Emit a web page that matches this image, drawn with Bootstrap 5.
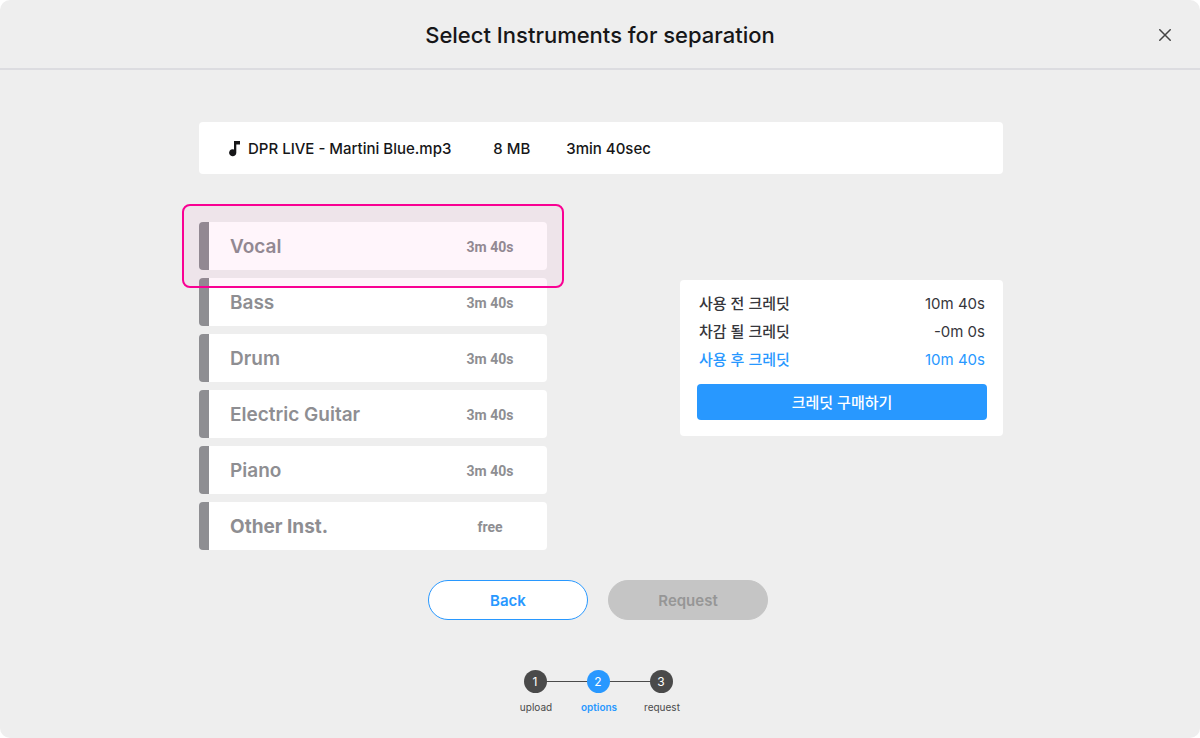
<!DOCTYPE html>
<html lang="ko">
<head>
<meta charset="utf-8">
<meta name="viewport" content="width=device-width, initial-scale=1">
<title>Select Instruments for separation</title>
<link href="https://cdn.jsdelivr.net/npm/bootstrap@5.3.0/dist/css/bootstrap.min.css" rel="stylesheet">
<style>
  :root { --accent: #2898ff; --muted: #8e8e92; --ink: #161618; }
  body { background: #fff; color: var(--ink); font-family: Inter, "Noto Sans CJK KR", sans-serif; }
  .dialog-page { background: #eee; border-radius: 10px; }
  .dialog-head { border-bottom: 2px solid #dcdce0; height: 70px; padding-top: 2px; }
  .dialog-title { font-size: 22px; line-height: 32px; font-weight: 500; }
  .close-btn { right: 24px; width: 22px; height: 22px; color: #444; }
  .dialog-body { max-width: 806px; padding: 52px 0 0 2px; }
  .panel { background: #fff; border-radius: 4px; }
  .file-bar { min-height: 52px; padding: 2px 30px 0; font-size: 15px; font-weight: 500; }
  .file-bar .size { margin-left: 42px; }
  .file-bar .length { margin-left: 36px; }
  .work-area { margin-top: 48px; }
  .inst-list { width: 348px; gap: 8px; }
  .inst { height: 48px; padding: 2px 22px 0 21px; border: 0; border-left: 10px solid var(--muted); color: var(--muted); font-size: 19px; font-weight: 600; text-align: left; }
  .inst .cost { width: 70px; font-family: Roboto, sans-serif; font-size: 14px; font-weight: 700; text-align: center; }
  .picked { top: -18px; left: -17px; right: -17px; height: 84px; border: 2px solid #f90093; border-radius: 8px; background: rgba(255, 0, 144, .04); pointer-events: none; }
  .credit { width: 323px; margin-top: 58px; padding: 10px 16px 16px 17px; font-size: 15px; }
  .credit .line { line-height: 28px; padding: 0 2px; color: #36363b; }
  .credit .line dt { font-weight: 500; }
  .credit .line dd { font-weight: 400; }
  .credit .line.after { color: var(--accent); }
  .btn.buy { height: 36px; margin-top: 10px; padding: 2px 0 0; border: 0; border-radius: 4px; background: var(--accent); color: #fff; font-size: 15px; font-weight: 500; }
  .dialog-foot { padding: 30px 6px 22px 0; }
  .actions { gap: 20px; }
  .btn.act { width: 160px; height: 40px; padding: 2px 0 0; border-radius: 20px; font-size: 15px; font-weight: 600; }
  .btn.back { background: #fff; border-color: var(--accent); color: var(--accent); }
  .btn.req:disabled { background: #c5c5c5; border-color: #c5c5c5; color: #969696; opacity: 1; }
  .steps { margin-top: 50px; font-size: 10px; line-height: 14px; color: #4a4a4a; }
  .step { width: 63px; }
  .step + .step::before { content: ""; position: absolute; top: 11px; right: 50%; width: 100%; border-top: 1px solid #4a4a4a; }
  .dot { z-index: 1; width: 23px; height: 23px; border-radius: 50%; background: #4a4a4a; color: #fff; font-size: 12px; margin-bottom: 7px; }
  .step-name { padding-left: 2px; }
  .step.now { color: var(--accent); font-weight: 600; }
  .step.now .dot { background: var(--accent); font-weight: 400; }
</style>
</head>
<body>
<div class="dialog-page min-vh-100">
  <header class="dialog-head position-relative d-flex align-items-center justify-content-center">
    <h1 class="dialog-title mb-0">Select Instruments for separation</h1>
    <button type="button" class="close-btn btn p-0 border-0 position-absolute d-flex align-items-center justify-content-center" aria-label="Close">
      <svg width="12" height="12" viewBox="0 0 12 12" fill="none" stroke="currentColor" stroke-width="1.5"><path d="M.3.3l11.4 11.4M11.7.3L.3 11.7"/></svg>
    </button>
  </header>

  <main class="dialog-body mx-auto">
    <div class="panel file-bar d-flex align-items-center">
      <svg class="me-2" width="11" height="16" viewBox="0 0 11 16" fill="#161618" aria-hidden="true"><path d="M5 0h6v3.6H7.3v8A3.6 3.6 0 1 1 5 8.4z"/></svg>
      <span>DPR LIVE - Martini Blue.mp3</span>
      <span class="size">8 MB</span>
      <span class="length">3min 40sec</span>
    </div>

    <div class="work-area d-flex justify-content-between align-items-start">
      <div class="inst-list position-relative d-flex flex-column">
        <button type="button" class="panel inst d-flex align-items-center justify-content-between"><span>Vocal</span><span class="cost">3m 40s</span></button>
        <button type="button" class="panel inst d-flex align-items-center justify-content-between"><span>Bass</span><span class="cost">3m 40s</span></button>
        <button type="button" class="panel inst d-flex align-items-center justify-content-between"><span>Drum</span><span class="cost">3m 40s</span></button>
        <button type="button" class="panel inst d-flex align-items-center justify-content-between"><span>Electric Guitar</span><span class="cost">3m 40s</span></button>
        <button type="button" class="panel inst d-flex align-items-center justify-content-between"><span>Piano</span><span class="cost">3m 40s</span></button>
        <button type="button" class="panel inst d-flex align-items-center justify-content-between"><span class="fw-bold">Other Inst.</span><span class="cost">free</span></button>
        <div class="picked position-absolute"></div>
      </div>

      <section class="panel credit">
        <dl class="mb-0">
          <div class="line d-flex justify-content-between"><dt>사용 전 크레딧</dt><dd class="mb-0">10m 40s</dd></div>
          <div class="line d-flex justify-content-between"><dt>차감 될 크레딧</dt><dd class="mb-0">-0m 0s</dd></div>
          <div class="line after d-flex justify-content-between"><dt>사용 후 크레딧</dt><dd class="mb-0">10m 40s</dd></div>
        </dl>
        <button type="button" class="btn buy w-100">크레딧 구매하기</button>
      </section>
    </div>

    <div class="dialog-foot">
      <div class="actions d-flex justify-content-center">
        <button type="button" class="btn act back">Back</button>
        <button type="button" class="btn act req" disabled>Request</button>
      </div>

      <ol class="steps list-unstyled mb-0 d-flex justify-content-center">
        <li class="step position-relative d-flex flex-column align-items-center"><span class="dot position-relative d-flex align-items-center justify-content-center">1</span><span class="step-name">upload</span></li>
        <li class="step now position-relative d-flex flex-column align-items-center"><span class="dot position-relative d-flex align-items-center justify-content-center">2</span><span class="step-name">options</span></li>
        <li class="step position-relative d-flex flex-column align-items-center"><span class="dot position-relative d-flex align-items-center justify-content-center">3</span><span class="step-name">request</span></li>
      </ol>
    </div>
  </main>
</div>
<script src="https://cdn.jsdelivr.net/npm/bootstrap@5.3.0/dist/js/bootstrap.bundle.min.js"></script>
</body>
</html>
